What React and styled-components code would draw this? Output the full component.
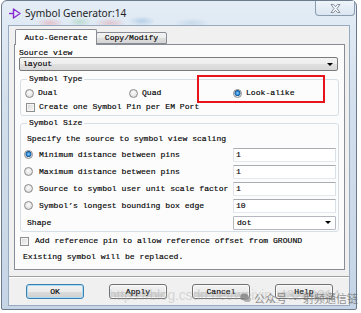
import React from 'react';
import styled, { createGlobalStyle } from 'styled-components';

const GlobalStyle = createGlobalStyle`
  html, body {
    margin: 0;
    padding: 0;
    background: #ffffff;
  }
  body {
    width: 361px;
    height: 313px;
    overflow: hidden;
  }
`;

const mono = `"Liberation Mono", "DejaVu Sans Mono", monospace`;

const Window = styled.div`
  position: relative;
  margin-left: 1px;
  width: 356px;
  height: 310px;
  box-sizing: border-box;
  border: 1px solid #6b7a8c;
  border-radius: 6px 6px 2px 2px;
  background: linear-gradient(180deg, #e4edf6 0%, #d2dfec 35%, #c6d5e6 100%);
  display: flex;
  flex-direction: column;
  font-family: ${mono};
  font-size: 8.1px;
  color: #000;
  -webkit-text-stroke: 0.15px #000;
`;

const TitleBar = styled.div`
  height: 24px;
  display: flex;
  align-items: flex-start;
  padding-left: 7px;
  background:
    radial-gradient(ellipse 14px 5px at 48px 22px, rgba(230, 120, 130, 0.35), transparent),
    radial-gradient(ellipse 12px 5px at 78px 21px, rgba(120, 190, 140, 0.35), transparent),
    radial-gradient(ellipse 16px 5px at 108px 22px, rgba(220, 110, 120, 0.3), transparent),
    radial-gradient(ellipse 14px 5px at 140px 20px, rgba(120, 170, 210, 0.4), transparent),
    radial-gradient(ellipse 18px 5px at 190px 22px, rgba(140, 180, 210, 0.3), transparent);
`;

const TitleLeft = styled.div`
  display: flex;
  align-items: center;
  gap: 4px;
  height: 24px;
`;

const Title = styled.span`
  font-family: "Noto Sans", "Open Sans", sans-serif;
  font-size: 10.2px;
  color: #1e1e1e;
  -webkit-text-stroke: 0;
`;

const CloseButton = styled.div`
  margin-left: auto;
  margin-right: 1px;
  width: 40px;
  height: 15px;
  box-sizing: border-box;
  border: 1px solid #8c9cb0;
  border-top: none;
  border-radius: 0 0 4px 4px;
  background: linear-gradient(180deg, #eef4fa 0%, #dbe6f1 100%);
  display: flex;
  align-items: center;
  justify-content: center;
`;

const Client = styled.div`
  margin: 0 6px 3px 6px;
  flex: 1;
  border: 1px solid #98aac0;
  background: #f0f0f0;
  padding: 3px 4px 0 5px;
  display: flex;
  flex-direction: column;
`;

const TabStrip = styled.div`
  display: flex;
  align-items: flex-end;
  height: 15px;
  padding-left: 1px;
`;

const Tab = styled.div`
  position: relative;
  z-index: ${(p) => (p.$active ? 2 : 1)};
  box-sizing: border-box;
  width: ${(p) => p.$w}px;
  height: ${(p) => (p.$active ? 16 : 12)}px;
  margin-bottom: ${(p) => (p.$active ? -1 : 0)}px;
  margin-left: ${(p) => (p.$active ? 0 : -1)}px;
  border: 1px solid #898c95;
  border-bottom: ${(p) => (p.$active ? 'none' : '1px solid #898c95')};
  border-radius: 2px 2px 0 0;
  background: ${(p) =>
    p.$active ? '#fcfcfc' : 'linear-gradient(180deg, #f3f3f3 0%, #ebebeb 50%, #dedede 51%, #d6d6d6 100%)'};
  display: flex;
  align-items: center;
  justify-content: center;
  line-height: 10px;
`;

const Panel = styled.div`
  height: 226px;
  box-sizing: border-box;
  border: 1px solid #898c95;
  background: #fcfcfc;
  padding: 3px 5px 0 4px;
  display: flex;
  flex-direction: column;
`;

const FieldLabel = styled.div`
  height: 9px;
  line-height: 9px;
`;

const DropSelect = styled.div`
  height: 14px;
  box-sizing: border-box;
  margin-right: ${(p) => (p.$flat ? 0 : 1)}px;
  border: 1px solid ${(p) => (p.$flat ? '#b5b8c0' : '#7a7a7a')};
  border-radius: ${(p) => (p.$flat ? 1 : 2)}px;
  background: ${(p) =>
    p.$flat ? '#ffffff' : 'linear-gradient(180deg, #f4f4f4 0%, #ececec 50%, #e0e0e0 51%, #d8d8d8 100%)'};
  display: flex;
  align-items: center;
  justify-content: space-between;
  padding: 0 4px 0 3px;
  line-height: 10px;
`;

const Arrow = styled.span`
  width: 0;
  height: 0;
  border-left: 3px solid transparent;
  border-right: 3px solid transparent;
  border-top: 3px solid #000;
`;

const Group = styled.fieldset`
  margin: ${(p) => p.$mt}px 0 0 1px;
  min-width: 0;
  border: 1px solid #d5dfe5;
  border-radius: 3px;
  padding: ${(p) => p.$pad};
`;

const Legend = styled.legend`
  padding: 0 2px;
  margin-left: ${(p) => p.$ml}px;
  line-height: 10px;
  height: 10px;
`;

const TypeRow = styled.div`
  display: grid;
  grid-template-columns: 104px 104px 1fr;
  height: 14px;
  align-items: center;
`;

const Option = styled.div`
  display: flex;
  align-items: center;
  gap: ${(p) => p.$gap || 4}px;
  line-height: 10px;
  white-space: nowrap;
`;

const Radio = styled.span`
  flex: none;
  width: 9px;
  height: 9px;
  box-sizing: border-box;
  border-radius: 50%;
  border: 1px solid #8b8b8b;
  background: ${(p) =>
    p.$checked
      ? 'radial-gradient(circle at 50% 45%, #8fd3ff 0, #2a86cf 1.8px, #16508f 2.8px, #dfe3e7 3.2px, #f6f6f6 100%)'
      : 'radial-gradient(circle at 50% 40%, #fdfdfd 0, #e6e6e6 3px, #d3d3d3 100%)'};
`;

const CheckRow = styled.div`
  display: flex;
  align-items: center;
  gap: ${(p) => p.$gap || 4}px;
  height: 14px;
  line-height: 10px;
  margin-top: ${(p) => p.$mt || 0}px;
  padding-left: ${(p) => p.$pl || 0}px;
  white-space: nowrap;
`;

const Checkbox = styled.span`
  flex: none;
  width: 9px;
  height: 9px;
  box-sizing: border-box;
  border: 1px solid #8e8f8f;
  background: linear-gradient(135deg, #d4d4d4 0%, #ececec 60%, #f8f8f8 100%);
  box-shadow: inset 0 0 0 1px #f4f4f4;
`;

const SpecifyRow = styled.div`
  height: 15px;
  padding-left: 3px;
  display: flex;
  align-items: center;
  line-height: 10px;
`;

const SizeRow = styled.div`
  display: grid;
  grid-template-columns: 1fr 103px;
  height: 17px;
  align-items: center;
  padding-right: 2px;
`;

const ShapeLabel = styled.span`
  padding-left: 3px;
  line-height: 10px;
`;

const TextBox = styled.div`
  height: 14px;
  box-sizing: border-box;
  border: 1px solid;
  border-color: #abadb3 #dbdfe6 #e3e9ef #e2e3ea;
  background: #fff;
  padding-left: 2px;
  display: flex;
  align-items: center;
  line-height: 10px;
`;

const Note = styled.div`
  height: 14px;
  margin-top: 2px;
  padding-left: 4px;
  display: flex;
  align-items: center;
  line-height: 10px;
`;

const Separator = styled.div`
  margin: 6px -4px 0 -5px;
  border-top: 1px solid #a0a0a0;
  border-bottom: 1px solid #ffffff;
`;

const ButtonRow = styled.div`
  display: flex;
  gap: 25px;
  margin-top: 6px;
  padding-left: 12px;
`;

const Button = styled.div`
  width: 58px;
  height: 15px;
  box-sizing: border-box;
  border: 1px solid ${(p) => (p.$primary ? '#3c7fb1' : '#707070')};
  border-radius: 3px;
  background: linear-gradient(180deg, #f2f2f2 0%, #ebebeb 50%, #dddddd 51%, #cfcfcf 100%);
  box-shadow: ${(p) => (p.$primary ? 'inset 0 0 0 1px #a8dcf5' : 'inset 0 0 0 1px #fbfbfb')};
  display: flex;
  align-items: center;
  justify-content: center;
  line-height: 10px;
`;

const RedBox = styled.div`
  position: absolute;
  left: 195px;
  top: 74px;
  width: 128px;
  height: 28px;
  box-sizing: border-box;
  border: 2px solid #e8141b;
  pointer-events: none;
`;

const Watermark = styled.div`
  position: absolute;
  left: 107px;
  top: 286px;
  display: flex;
  align-items: center;
  pointer-events: none;
  white-space: nowrap;
  -webkit-text-stroke: 0;
`;

const WatermarkUrl = styled.span`
  font-family: "Liberation Sans", Arial, sans-serif;
  font-size: 14px;
  color: rgba(170, 170, 170, 0.4);
  letter-spacing: -0.2px;
`;

const Badge = styled.div`
  position: absolute;
  left: 238px;
  top: 291px;
  display: flex;
  align-items: center;
  gap: 3px;
  pointer-events: none;
  white-space: nowrap;
  font-family: "Noto Sans CJK SC", "Noto Sans", sans-serif;
  font-size: 11px;
  line-height: 12px;
  color: rgba(110, 110, 110, 0.75);
  -webkit-text-stroke: 0;
`;

const LogoIcon = () => (
  <svg width="12" height="11" viewBox="0 0 12 11">
    <path d="M0 5.5 H4" stroke="#8a2bd0" strokeWidth="1.4" />
    <path d="M4.5 1 L11 5.5 L4.5 10 Z" fill="none" stroke="#8a2bd0" strokeWidth="1.4" strokeLinejoin="round" />
  </svg>
);

const CloseIcon = () => (
  <svg width="11" height="9" viewBox="0 0 11 9">
    <path
      d="M1 0.5 H3.5 L5.5 2.7 L7.5 0.5 H10 L7 4.5 L10 8.5 H7.5 L5.5 6.3 L3.5 8.5 H1 L4 4.5 Z"
      fill="#f4f7fa"
      stroke="#7d8894"
      strokeWidth="0.9"
      strokeLinejoin="round"
    />
  </svg>
);

const ChatIcon = () => (
  <svg width="11" height="10" viewBox="0 0 11 10">
    <ellipse cx="4.3" cy="4" rx="4" ry="3.4" fill="rgba(120,120,120,0.7)" />
    <ellipse cx="7.3" cy="6.2" rx="3.4" ry="2.9" fill="rgba(150,150,150,0.7)" />
  </svg>
);

const sizeOptions = [
  { label: 'Minimum distance between pins', value: '1', checked: true },
  { label: 'Maximum distance between pins', value: '1' },
  { label: 'Source to symbol user unit scale factor', value: '1' },
  { label: 'Symbol\u2019s longest bounding box edge', value: '10' },
];

export default function App() {
  return (
    <>
      <GlobalStyle />
      <Window>
        <TitleBar>
          <TitleLeft>
            <LogoIcon />
            <Title>Symbol Generator:14</Title>
          </TitleLeft>
          <CloseButton>
            <CloseIcon />
          </CloseButton>
        </TitleBar>

        <Client>
          <TabStrip>
            <Tab $active $w={82}>Auto-Generate</Tab>
            <Tab $w={71}>Copy/Modify</Tab>
          </TabStrip>

          <Panel>
            <FieldLabel>Source view</FieldLabel>
            <DropSelect>
              <span>layout</span>
              <Arrow />
            </DropSelect>

            <Group $mt={3} $pad="2px 0 1px 4px">
              <Legend $ml={2}>Symbol Type</Legend>
              <TypeRow>
                <Option>
                  <Radio />
                  <span>Dual</span>
                </Option>
                <Option>
                  <Radio />
                  <span>Quad</span>
                </Option>
                <Option>
                  <Radio $checked />
                  <span>Look-alike</span>
                </Option>
              </TypeRow>
              <CheckRow $pl={1}>
                <Checkbox />
                <span>Create one Symbol Pin per EM Port</span>
              </CheckRow>
            </Group>

            <Group $mt={2} $pad="3px 0 0 3px">
              <Legend $ml={3}>Symbol Size</Legend>
              <SpecifyRow>Specify the source to symbol view scaling</SpecifyRow>
              {sizeOptions.map((opt) => (
                <SizeRow key={opt.label}>
                  <Option $gap={6}>
                    <Radio $checked={opt.checked} />
                    <span>{opt.label}</span>
                  </Option>
                  <TextBox>{opt.value}</TextBox>
                </SizeRow>
              ))}
              <SizeRow>
                <ShapeLabel>Shape</ShapeLabel>
                <DropSelect $flat>
                  <span>dot</span>
                  <Arrow />
                </DropSelect>
              </SizeRow>
            </Group>

            <CheckRow $mt={2} $pl={1} $gap={6}>
              <Checkbox />
              <span>Add reference pin to allow reference offset from GROUND</span>
            </CheckRow>
            <Note>Existing symbol will be replaced.</Note>
          </Panel>

          <Separator />
          <ButtonRow>
            <Button $primary>OK</Button>
            <Button>Apply</Button>
            <Button>Cancel</Button>
            <Button>Help</Button>
          </ButtonRow>
        </Client>

        <RedBox />
        <Watermark>
          <WatermarkUrl>https://blog.csdn.net/weixin_43249314</WatermarkUrl>
        </Watermark>
        <Badge>
          <ChatIcon />
          <span>公众号 · 射频通信链</span>
        </Badge>
      </Window>
    </>
  );
}
